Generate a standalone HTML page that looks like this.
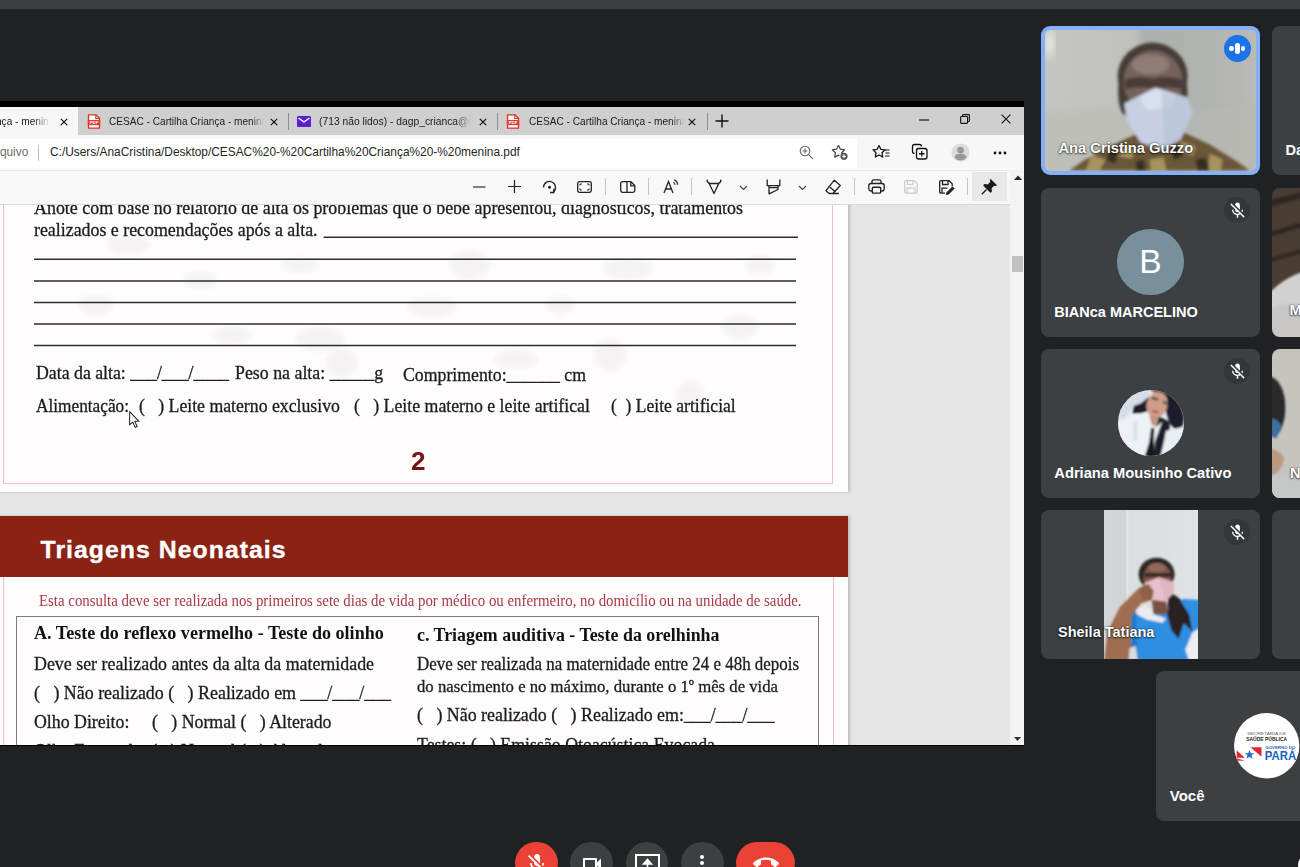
<!DOCTYPE html>
<html lang="pt-BR">
<head>
<meta charset="utf-8">
<title>Meet</title>
<style>
*{box-sizing:border-box;margin:0;padding:0}
html,body{width:1300px;height:867px;overflow:hidden;background:#202124;font-family:"Liberation Sans",sans-serif}
.abs{position:absolute}
#top{left:0;top:0;width:1300px;height:9px;background:#3c3d40}
#share{left:0;top:101px;width:1024px;height:644.700px;background:#000;overflow:hidden}
#tabs{left:0;top:6px;width:1024px;height:28px;background:#cfcfcf}
#addr{left:0;top:34px;width:1024px;height:35px;background:#f7f7f7}
#ptool{left:0;top:69px;width:1010px;height:35px;background:#f8f8f8;border-bottom:1px solid #d8d8d8;border-top:1px solid #ebebeb}
#pdf{left:0;top:104px;width:1010px;height:540px;background:#e6e6e6;overflow:hidden}
#sbar{left:1010px;top:69px;width:14px;height:575px;background:#f3f3f3}
.tile{background:#3c4043;border-radius:8px;overflow:hidden}
.name{color:#fff;font-weight:bold;font-size:15px;white-space:nowrap}

.tabtxt{position:absolute;top:0;height:29px;line-height:29px;font-size:10.1px;color:#1b1b1b;white-space:nowrap;overflow:hidden}
.tabx{position:absolute;top:11px;width:8px;height:8px}
.tsep{position:absolute;top:6px;width:1px;height:17px;background:#8e8e8e}
.ico{position:absolute}
.psep{position:absolute;top:9px;width:1px;height:17px;background:#c4c4c4}
.t{position:absolute;white-space:nowrap;line-height:1;transform-origin:0 0}
#ptool .ico,#ptool>div{margin-top:-2px}

</style>
</head>
<body>
<div id="top" class="abs"></div>
<div id="share" class="abs">
  <div id="tabs" class="abs">
<div class="abs" style="left:0;top:0;width:78px;height:28px;background:#f7f7f7"></div>
<div class="tabtxt" style="left:-4px;width:54px;-webkit-mask-image:linear-gradient(90deg,#000 70%,transparent 100%);mask-image:linear-gradient(90deg,#000 70%,transparent 100%)">nça - menina</div>
<svg class="tabx" style="left:59.5px" viewBox="0 0 10 10"><path d="M1 1l8 8M9 1l-8 8" stroke="#111" stroke-width="1.5" fill="none"/></svg>
<svg class="ico" style="left:87px;top:7px" width="14" height="15" viewBox="0 0 14 15"><path d="M1.5 0.8h7.5l3.5 3.5v9.9h-11z" fill="#fff" stroke="#d93025" stroke-width="1.3"/><path d="M8.8 0.8v3.7h3.7" fill="none" stroke="#d93025" stroke-width="1.1"/><rect x="0.8" y="6" width="12.4" height="5.2" fill="#e53935"/><text x="7" y="10.2" font-family="Liberation Sans,sans-serif" font-size="4.2" font-weight="bold" fill="#fff" text-anchor="middle">PDF</text></svg>
<div class="tabtxt" style="left:109px;width:155px;-webkit-mask-image:linear-gradient(90deg,#000 92%,transparent 100%);mask-image:linear-gradient(90deg,#000 92%,transparent 100%)">CESAC - Cartilha Criança - menina</div>
<svg class="tabx" style="left:269.5px" viewBox="0 0 10 10"><path d="M1 1l8 8M9 1l-8 8" stroke="#111" stroke-width="1.5" fill="none"/></svg>
<div class="tsep" style="left:288px"></div>
<svg class="ico" style="left:297px;top:9px" width="14" height="11" viewBox="0 0 14 11"><rect x="0" y="0" width="14" height="11" rx="1" fill="#5a1fd1"/><path d="M1.5 2l5.5 4l5.5-4" stroke="#fff" stroke-width="1.4" fill="none"/></svg>
<div class="tabtxt" style="left:319px;width:152px;font-size:10.300px;-webkit-mask-image:linear-gradient(90deg,#000 90%,transparent 100%);mask-image:linear-gradient(90deg,#000 90%,transparent 100%)">(713 não lidos) - dagp_crianca@gmail</div>
<svg class="tabx" style="left:479px" viewBox="0 0 10 10"><path d="M1 1l8 8M9 1l-8 8" stroke="#111" stroke-width="1.5" fill="none"/></svg>
<div class="tsep" style="left:497px"></div>
<svg class="ico" style="left:506px;top:7px" width="14" height="15" viewBox="0 0 14 15"><path d="M1.5 0.8h7.5l3.5 3.5v9.9h-11z" fill="#fff" stroke="#d93025" stroke-width="1.3"/><path d="M8.8 0.8v3.7h3.7" fill="none" stroke="#d93025" stroke-width="1.1"/><rect x="0.8" y="6" width="12.4" height="5.2" fill="#e53935"/><text x="7" y="10.2" font-family="Liberation Sans,sans-serif" font-size="4.2" font-weight="bold" fill="#fff" text-anchor="middle">PDF</text></svg>
<div class="tabtxt" style="left:529px;width:155px;-webkit-mask-image:linear-gradient(90deg,#000 92%,transparent 100%);mask-image:linear-gradient(90deg,#000 92%,transparent 100%)">CESAC - Cartilha Criança - menina</div>
<svg class="tabx" style="left:688px" viewBox="0 0 10 10"><path d="M1 1l8 8M9 1l-8 8" stroke="#111" stroke-width="1.5" fill="none"/></svg>
<div class="tsep" style="left:707px"></div>
<svg class="ico" style="left:715px;top:7px" width="14" height="14" viewBox="0 0 14 14"><path d="M7 0.5v13M0.5 7h13" stroke="#111" stroke-width="1.4" fill="none"/></svg>
<svg class="ico" style="left:919px;top:11.700px" width="11" height="2" viewBox="0 0 12 2"><path d="M0 1h11" stroke="#111" stroke-width="1.3"/></svg>
<svg class="ico" style="left:959.500px;top:7.200px" width="10" height="10" viewBox="0 0 11 11"><rect x="0.7" y="2.7" width="7.6" height="7.6" rx="1" fill="none" stroke="#111" stroke-width="1.2"/><path d="M2.7 2.7v-1q0-1 1-1h5.6q1 0 1 1v5.6q0 1-1 1h-1" fill="none" stroke="#111" stroke-width="1.2"/></svg>
<svg class="ico" style="left:1000.500px;top:7.200px" width="10" height="10" viewBox="0 0 11 11"><path d="M0.7 0.7l9.6 9.6M10.3 0.7l-9.6 9.6" stroke="#111" stroke-width="1.2" fill="none"/></svg>
</div>
  <div id="addr" class="abs">
<div class="abs" style="left:0;top:3.500px;width:857px;height:29px;background:#fff"></div>
<div class="abs" style="left:-12px;top:0;height:35px;line-height:35px;font-size:11.9px;color:#6b6b6b;white-space:nowrap">Arquivo</div>
<div class="abs" style="left:38px;top:10px;width:1px;height:16px;background:#bdbdbd"></div>
<div class="abs" id="url" style="left:50px;top:0;height:35px;line-height:35px;font-size:11.9px;color:#262626;white-space:nowrap">C:/Users/AnaCristina/Desktop/CESAC%20-%20Cartilha%20Criança%20-%20menina.pdf</div>
<svg class="ico" style="left:799px;top:10px" width="15" height="15" viewBox="0 0 15 15"><circle cx="6" cy="6" r="4.8" fill="none" stroke="#666" stroke-width="1.1"/><path d="M9.6 9.6l4.6 4.6M6 3.6v4.8M3.6 6h4.8" stroke="#666" stroke-width="1.1" fill="none"/></svg>
<svg class="ico" style="left:831px;top:9px" width="18" height="17" viewBox="0 0 18 17"><path d="M7.5 1.2l1.9 4l4.3 0.6l-3.1 3l0.3 1.2M7.5 1.2l-1.9 4l-4.3 0.6l3.1 3l-0.7 4.3l3.8-2l1 0.5" fill="none" stroke="#444" stroke-width="1.2" stroke-linejoin="round"/><circle cx="13" cy="12.3" r="3.6" fill="#555"/><path d="M13 10.3v4M11 12.3h4" stroke="#fff" stroke-width="1"/></svg>
<svg class="ico" style="left:872px;top:9px" width="18" height="17" viewBox="0 0 18 17"><path d="M7 1.5l1.8 3.8l4.2 0.6l-3 2.9l0.7 4.2l-3.7-2l-3.7 2l0.7-4.2l-3-2.9l4.2-0.6z" fill="none" stroke="#111" stroke-width="1.3" stroke-linejoin="round"/><path d="M12.5 6h5M13.5 9h4M13 12h4.5" stroke="#111" stroke-width="1.2"/></svg>
<svg class="ico" style="left:911px;top:8px" width="18" height="18" viewBox="0 0 18 18"><path d="M3.5 10.5q-2 0-2-2v-5q0-2 2-2h5q2 0 2 2" fill="none" stroke="#111" stroke-width="1.3"/><rect x="5.5" y="5.5" width="10.5" height="10.5" rx="2.2" fill="none" stroke="#111" stroke-width="1.3"/><path d="M10.75 8v5.5M8 10.75h5.5" stroke="#111" stroke-width="1.3"/></svg>
<svg class="ico" style="left:950.500px;top:8.200px" width="19" height="19" viewBox="0 0 24 24"><circle cx="12" cy="12" r="11.5" fill="#dcdcdc"/><circle cx="12" cy="9" r="4.2" fill="#9a9a9a"/><path d="M4.5 18.5q0-5 7.5-5t7.5 5q-3 3.5-7.500 3.500t-7.500-3.500z" fill="#9a9a9a"/></svg>
<svg class="ico" style="left:993px;top:16px" width="14" height="4" viewBox="0 0 14 4"><circle cx="2" cy="2" r="1.4" fill="#111"/><circle cx="7" cy="2" r="1.4" fill="#111"/><circle cx="12" cy="2" r="1.4" fill="#111"/></svg>
</div>
  <div id="ptool" class="abs">
<svg class="ico" style="left:473px;top:17px" width="13" height="2" viewBox="0 0 13 2"><path d="M0 1h12.5" stroke="#333" stroke-width="1.2"/></svg>
<svg class="ico" style="left:508px;top:11px" width="13" height="13" viewBox="0 0 13 13"><path d="M6.500 0v13M0 6.500h13" stroke="#222" stroke-width="1.2"/></svg>
<svg class="ico" style="left:542px;top:10px" width="16" height="16" viewBox="0 0 16 16"><path d="M1.500 8.500a6 6 0 1 1 9.800 4.600" stroke="#222" stroke-width="1.3" fill="none"/><path d="M11.800 9.800v3.700h-3.700" stroke="#222" stroke-width="1.3" fill="none"/><circle cx="7.500" cy="8.300" r="1.500" fill="#222"/></svg>
<svg class="ico" style="left:577px;top:12px" width="15" height="12" viewBox="0 0 15 12"><rect x="0.700" y="0.700" width="13.600" height="10.600" rx="1.800" stroke="#222" stroke-width="1.3" fill="none"/><path d="M3 4.500v-1.500h1.800M12 4.500v-1.500h-1.800M3 7.500v1.500h1.800M12 7.500v1.500h-1.800" stroke="#222" stroke-width="1" fill="none"/></svg>
<div class="psep" style="left:605px"></div>
<svg class="ico" style="left:620px;top:12px" width="16" height="12" viewBox="0 0 16 12"><path d="M7 0.700h-4.500q-1.800 0-1.800 1.800v7q0 1.800 1.800 1.800h4.500zM7 0.700h4l3.800 3.800v5q0 1.800-1.800 1.800h-6" stroke="#222" stroke-width="1.3" fill="none" stroke-linejoin="round"/><path d="M10.800 1v3.800h3.800" stroke="#222" stroke-width="1.3" fill="none"/></svg>
<div class="psep" style="left:648px"></div>
<svg class="ico" style="left:663px;top:10px" width="17" height="15" viewBox="0 0 17 15"><path d="M1 14l4.500-11.500l4.500 11.500M2.600 10h5.800" stroke="#222" stroke-width="1.3" fill="none"/><path d="M10.300 3.200q1.500 0.700 1.800 2.600M11.300 0.800q3 1.300 3.500 5" stroke="#222" stroke-width="1.100" fill="none"/></svg>
<div class="psep" style="left:691px"></div>
<svg class="ico" style="left:706px;top:10.300px" width="16" height="16" viewBox="0 0 16 16"><path d="M1 0.600q0.200 3.400 3 3.900h8q2.800-0.500 3-3.900M3.300 4.800l4.700 9.700l4.700-9.700" stroke="#222" stroke-width="1.3" fill="none" stroke-linejoin="round"/></svg>
<svg class="ico" style="left:739px;top:16px" width="9" height="6" viewBox="0 0 9 6"><path d="M1 1l3.500 3.500l3.500-3.500" stroke="#444" stroke-width="1.100" fill="none"/></svg>
<svg class="ico" style="left:766px;top:10.300px" width="15" height="16" viewBox="0 0 15 16"><path d="M1.200 0.600v6h12.600v-6M3 6.800v8l9-4.300v-3.700M3 8.700h9" stroke="#222" stroke-width="1.3" fill="none" stroke-linejoin="round"/></svg>
<svg class="ico" style="left:798px;top:16px" width="9" height="6" viewBox="0 0 9 6"><path d="M1 1l3.500 3.500l3.500-3.500" stroke="#444" stroke-width="1.100" fill="none"/></svg>
<svg class="ico" style="left:825px;top:10px" width="17" height="16" viewBox="0 0 17 16"><path d="M9.300 1.200l6 5.300l-7.300 8h-3.800l-3.200-2.800z" stroke="#222" stroke-width="1.3" fill="none" stroke-linejoin="round"/><path d="M4.800 8l5.600 5M8 14.500h6" stroke="#222" stroke-width="1.3" fill="none"/></svg>
<div class="psep" style="left:854px"></div>
<svg class="ico" style="left:868px;top:10px" width="17" height="15" viewBox="0 0 17 15"><path d="M4 4.500v-2q0-1.700 1.700-1.700h5.600q1.700 0 1.700 1.700v2" stroke="#222" stroke-width="1.3" fill="none"/><rect x="0.800" y="4.500" width="15.400" height="7.500" rx="2.200" stroke="#222" stroke-width="1.3" fill="none" stroke-width="1.500"/><rect x="4.300" y="8.300" width="8.400" height="5.800" rx="1.200" fill="#f8f8f8" stroke="#222" stroke-width="1.400"/></svg>
<svg class="ico" style="left:904px;top:11px" width="14" height="14" viewBox="0 0 14 14"><path d="M0.700 2.200q0-1.500 1.500-1.500h8l3 3v8q0 1.500-1.500 1.500h-9.500q-1.500 0-1.500-1.500zM3.500 0.700v3.800h5.500v-3.800M3 13v-4.800h8v4.800" stroke="#c9c9c9" stroke-width="1.200" fill="none"/></svg>
<svg class="ico" style="left:939px;top:11px" width="16" height="15" viewBox="0 0 16 15"><path d="M6 13.200h-3.800q-1.500 0-1.500-1.500v-9.500q0-1.500 1.500-1.500h8l3 3v2.500M3.500 0.700v3.800h5.500v-3.800M3 13v-4.800h5.500" stroke="#222" stroke-width="1.3" fill="none"/><path d="M13.500 6.800l1.700 1.700l-5.500 5.500l-2.500 0.800l0.800-2.500z" fill="#222" stroke="#222" stroke-width="0.800" stroke-linejoin="round"/></svg>
<div class="psep" style="left:967px"></div>
<div class="abs" style="left:972px;top:3px;width:35px;height:29px;background:#e8e8e8"></div>
<svg class="ico" style="left:981px;top:9px" width="17" height="17" viewBox="0 0 17 17"><path d="M9.500 0.800l6.700 6.700l-1.600 0.600l-1.400-0.400l-2.600 2.600l0.300 3.300l-1.300 1.300l-7.500-7.500l1.300-1.300l3.300 0.300l2.600-2.600l-0.400-1.400z" fill="#1a1a1a"/><path d="M5.500 11.500l-4.700 4.700" stroke="#1a1a1a" stroke-width="1.300"/></svg>
</div>
  <div id="pdf" class="abs">
<div class="abs" style="left:-10px;top:-10px;width:858.2px;height:296.5px;background:#fefcfd;box-shadow:2px 0 3px rgba(0,0,0,.18)"></div>
<div class="abs" style="left:3px;top:-10px;width:830px;height:288.5px;border:1.7px solid #f0bec3"></div>
<svg class="ico" style="left:0;top:0" width="850" height="290" viewBox="0 0 850 290"><defs><filter id="wmb" x="-30%" y="-30%" width="160%" height="160%"><feGaussianBlur stdDeviation="2.500"/></filter></defs><g filter="url(#wmb)" fill="#f3f1f2" opacity=".85"><ellipse cx="128" cy="40" rx="22" ry="9"/><ellipse cx="232" cy="130" rx="20" ry="8"/><ellipse cx="320" cy="134" rx="24" ry="12"/><ellipse cx="342" cy="158" rx="16" ry="14"/><ellipse cx="432" cy="102" rx="26" ry="10"/><ellipse cx="516" cy="154" rx="22" ry="9"/><ellipse cx="628" cy="64" rx="24" ry="10"/><ellipse cx="740" cy="122" rx="18" ry="12"/><ellipse cx="96" cy="100" rx="18" ry="10"/><ellipse cx="470" cy="60" rx="20" ry="14"/><ellipse cx="610" cy="150" rx="16" ry="16"/><ellipse cx="690" cy="190" rx="14" ry="14"/><ellipse cx="200" cy="75" rx="16" ry="9"/><ellipse cx="560" cy="100" rx="14" ry="9"/><ellipse cx="760" cy="60" rx="14" ry="10"/><ellipse cx="300" cy="60" rx="18" ry="8"/></g></svg>
<svg class="ico" style="left:0;top:0" width="860" height="200" viewBox="0 0 860 200"><path d="M323.6 32.30H798" stroke="#2c2c2c" stroke-width="1.5"/><path d="M34 54.20H796" stroke="#2c2c2c" stroke-width="1.5"/><path d="M34 76.00H796" stroke="#2c2c2c" stroke-width="1.5"/><path d="M34 97.40H796" stroke="#2c2c2c" stroke-width="1.5"/><path d="M34 119.00H796" stroke="#2c2c2c" stroke-width="1.5"/><path d="M34 140.40H796" stroke="#2c2c2c" stroke-width="1.5"/></svg>
<div class="abs" style="left:-10px;top:311px;width:858.2px;height:300px;background:#fefcfd;box-shadow:2px 0 3px rgba(0,0,0,.18)"></div>
<div class="abs" style="left:3px;top:360px;width:831px;height:300px;border:1.7px solid #f0bec3"></div>
<div class="abs" style="left:-10px;top:311px;width:858.2px;height:60.5px;background:#8b2315"></div>
<div class="abs" style="left:16px;top:410.5px;width:803px;height:300px;border:1.6px solid #7d7d7d"></div>
<div class="t" style="left:34.0px;top:-4.71px;font-family:'Liberation Serif',serif;font-size:17.8px;font-weight:normal;color:#1c1c1c;-webkit-text-stroke:0.3px #1c1c1c;transform:scaleX(1.0069)">Anote com base no relatório de alta os problemas que o bebê apresentou, diagnósticos, tratamentos</div>
<div class="t" style="left:34.0px;top:16.59px;font-family:'Liberation Serif',serif;font-size:17.8px;font-weight:normal;color:#1c1c1c;-webkit-text-stroke:0.3px #1c1c1c;transform:scaleX(1.0043)">realizados e recomendações após a alta.</div>
<div class="t" style="left:36.0px;top:160.29px;font-family:'Liberation Serif',serif;font-size:17.8px;font-weight:normal;color:#1c1c1c;-webkit-text-stroke:0.3px #1c1c1c;transform:scaleX(0.9996)">Data da alta: ___/___/____</div>
<div class="t" style="left:235.4px;top:160.29px;font-family:'Liberation Serif',serif;font-size:17.8px;font-weight:normal;color:#1c1c1c;-webkit-text-stroke:0.3px #1c1c1c;transform:scaleX(1.0036)">Peso na alta: _____g</div>
<div class="t" style="left:403.4px;top:161.59px;font-family:'Liberation Serif',serif;font-size:17.8px;font-weight:normal;color:#1c1c1c;-webkit-text-stroke:0.3px #1c1c1c;transform:scaleX(0.9987)">Comprimento:______ cm</div>
<div class="t" style="left:36.0px;top:193.29px;font-family:'Liberation Serif',serif;font-size:17.8px;font-weight:normal;color:#1c1c1c;-webkit-text-stroke:0.3px #1c1c1c;transform:scaleX(0.9708)">Alimentação:</div>
<div class="t" style="left:138.5px;top:193.29px;font-family:'Liberation Serif',serif;font-size:17.8px;font-weight:normal;color:#1c1c1c;-webkit-text-stroke:0.3px #1c1c1c;transform:scaleX(0.9973)">(&nbsp;&nbsp;&nbsp;) Leite materno exclusivo</div>
<div class="t" style="left:353.8px;top:193.29px;font-family:'Liberation Serif',serif;font-size:17.8px;font-weight:normal;color:#1c1c1c;-webkit-text-stroke:0.3px #1c1c1c;transform:scaleX(0.9997)">(&nbsp;&nbsp;&nbsp;) Leite materno e leite artifical</div>
<div class="t" style="left:610.5px;top:193.29px;font-family:'Liberation Serif',serif;font-size:17.8px;font-weight:normal;color:#1c1c1c;-webkit-text-stroke:0.3px #1c1c1c;transform:scaleX(0.9867)">(&nbsp;&nbsp;) Leite artificial</div>
<div class="t" style="left:411.4px;top:243.49px;font-family:'Liberation Sans',sans-serif;font-size:26px;font-weight:bold;color:#7a1419;-webkit-text-stroke:0px #7a1419;transform:scaleX(1.0022)">2</div>
<div class="t" style="left:40.6px;top:332.71px;font-family:'Liberation Sans',sans-serif;font-size:24.8px;font-weight:bold;color:#fff;-webkit-text-stroke:0.35px #fff;transform:scaleX(1.0000);letter-spacing:1.036px">Triagens Neonatais</div>
<div class="t" style="left:39.4px;top:387.63px;font-family:'Liberation Serif',serif;font-size:16.2px;font-weight:normal;color:#aa3a44;-webkit-text-stroke:0px #aa3a44;transform:scaleX(0.9175)">Esta consulta deve ser realizada nos primeiros sete dias de vida por médico ou enfermeiro, no domicílio ou na unidade de saúde.</div>
<div class="t" style="left:34.0px;top:418.93px;font-family:'Liberation Serif',serif;font-size:18px;font-weight:bold;color:#111;-webkit-text-stroke:0px #111;transform:scaleX(1.0047)">A. Teste do reflexo vermelho - Teste do olinho</div>
<div class="t" style="left:417.0px;top:420.63px;font-family:'Liberation Serif',serif;font-size:18px;font-weight:bold;color:#111;-webkit-text-stroke:0px #111;transform:scaleX(0.9933)">c. Triagem auditiva - Teste da orelhinha</div>
<div class="t" style="left:34.0px;top:450.46px;font-family:'Liberation Serif',serif;font-size:18.2px;font-weight:normal;color:#1c1c1c;-webkit-text-stroke:0.3px #1c1c1c;transform:scaleX(0.9830)">Deve ser realizado antes da alta da maternidade</div>
<div class="t" style="left:417.0px;top:450.46px;font-family:'Liberation Serif',serif;font-size:18.2px;font-weight:normal;color:#1c1c1c;-webkit-text-stroke:0.3px #1c1c1c;transform:scaleX(0.9305)">Deve ser realizada na maternidade entre 24 e 48h depois</div>
<div class="t" style="left:417.0px;top:472.86px;font-family:'Liberation Serif',serif;font-size:17px;font-weight:normal;color:#1c1c1c;-webkit-text-stroke:0.3px #1c1c1c;transform:scaleX(0.9826)">do nascimento e no máximo, durante o 1º mês de vida</div>
<div class="t" style="left:34.0px;top:479.23px;font-family:'Liberation Serif',serif;font-size:18px;font-weight:normal;color:#1c1c1c;-webkit-text-stroke:0.3px #1c1c1c;transform:scaleX(0.9948)">(&nbsp;&nbsp;&nbsp;) Não realizado (&nbsp;&nbsp;&nbsp;) Realizado em ___/___/___</div>
<div class="t" style="left:417.0px;top:501.43px;font-family:'Liberation Serif',serif;font-size:18px;font-weight:normal;color:#1c1c1c;-webkit-text-stroke:0.3px #1c1c1c;transform:scaleX(0.9945)">(&nbsp;&nbsp;&nbsp;) Não realizado (&nbsp;&nbsp;&nbsp;) Realizado em:___/___/___</div>
<div class="t" style="left:34.0px;top:508.43px;font-family:'Liberation Serif',serif;font-size:18px;font-weight:normal;color:#1c1c1c;-webkit-text-stroke:0.3px #1c1c1c;transform:scaleX(0.9886)">Olho Direito:</div>
<div class="t" style="left:152.0px;top:508.43px;font-family:'Liberation Serif',serif;font-size:18px;font-weight:normal;color:#1c1c1c;-webkit-text-stroke:0.3px #1c1c1c;transform:scaleX(0.9892)">(&nbsp;&nbsp;&nbsp;) Normal (&nbsp;&nbsp;&nbsp;) Alterado</div>
<div class="t" style="left:34.0px;top:536.62px;font-family:'Liberation Serif',serif;font-size:18px;font-weight:normal;color:#1c1c1c;-webkit-text-stroke:0.3px #1c1c1c;transform:scaleX(0.9935)">Olho Esquerdo: (&nbsp;&nbsp;&nbsp;) Normal (&nbsp;&nbsp;&nbsp;) Alterado</div>
<div class="t" style="left:417.0px;top:531.12px;font-family:'Liberation Serif',serif;font-size:18px;font-weight:normal;color:#1c1c1c;-webkit-text-stroke:0.3px #1c1c1c;transform:scaleX(0.9896)">Testes: (&nbsp;&nbsp;&nbsp;) Emissão Otoacústica Evocada</div>
<svg class="ico" style="left:128.500px;top:206px" width="11" height="17.500" viewBox="0 0 12 19"><path d="M0.7 0.7v14.500l3.400-3.200l2.600 5.800l2.200-1l-2.600-5.600h4.600z" fill="#fff" stroke="#222" stroke-width="1.1" stroke-linejoin="round"/></svg>
</div>
  <div id="sbar" class="abs">
<svg class="ico" style="left:3.500px;top:4.500px" width="8" height="5" viewBox="0 0 8 5"><path d="M0 5l4-4.500l4 4.500z" fill="#222"/></svg>
<div class="abs" style="left:2px;top:86px;width:11px;height:16px;background:#c1c1c1"></div>
<svg class="ico" style="left:4px;top:567px" width="7" height="4" viewBox="0 0 7 4"><path d="M0 0l3.500 4l3.500-4z" fill="#333"/></svg>
</div>
</div>
<div id="tiles">
<div class="abs" style="left:1041.4px;top:26.4px;width:218.2px;height:148.5px;border-radius:9px;background:#84b0f8"></div>
<svg class="ico" style="left:1045.4px;top:30.4px;border-radius:5px" width="210.200" height="140.500" viewBox="1045.400 30.400 210.200 140.500">
<defs>
<filter id="b1" x="-20%" y="-20%" width="140%" height="140%"><feGaussianBlur stdDeviation="1.600"/></filter>
<filter id="b3" x="-20%" y="-20%" width="140%" height="140%"><feGaussianBlur stdDeviation="4"/></filter>
<linearGradient id="w1" x1="0" x2="1" y1="0" y2="0"><stop offset="0" stop-color="#c6c6c2"/><stop offset="0.420" stop-color="#c0c1bd"/><stop offset="0.470" stop-color="#abb0ac"/><stop offset="0.800" stop-color="#b3b5b1"/><stop offset="1" stop-color="#bcbcb8"/></linearGradient>
</defs>
<rect x="1040" y="25" width="225" height="155" fill="url(#w1)"/>
<ellipse cx="1050" cy="44" rx="4" ry="14" fill="#f2f0ea" filter="url(#b3)"/>
<rect x="1040" y="110" width="225" height="70" fill="#b9b9b4" opacity=".5" filter="url(#b3)"/>
<g filter="url(#b1)">
<path d="M1070 171l14-10l30-16l26-12l40-2l30 14l26 16l14 10z" fill="#6a5738"/>
<ellipse cx="1153" cy="77" rx="35" ry="34" fill="#463d38"/>
<path d="M1119 82q-2 22 4 32l8 4l-2-36zM1187 82q3 20-3 32l-8 4l2-36z" fill="#463d38"/>
<ellipse cx="1153.500" cy="82" rx="29.500" ry="31" fill="#76625b"/>
<ellipse cx="1151" cy="65" rx="19" ry="10" fill="#8f7b74"/>
<path d="M1125 80q14-5 28-1q15-4 30 1l-1 10q-14-4-29-1q-14-3-27 1z" fill="#4a3c38"/>
<path d="M1148 130h18l5 18h-27z" fill="#7c5e4e"/>
<path d="M1124.600 104l31-16l32 10l5.500 15l-12 27l-18 10l-22-7l-13-20z" fill="#c6d0e2"/>
<path d="M1140 98l16-9l20 6l-4 12l-24 4z" fill="#d9e0ee"/>
<path d="M1162 92l26 7l5 14l-12 27l-16 9z" fill="#b3bfd4" opacity=".55"/>
<path d="M1092 156l14 4l-6 11h-14zM1124 146l12 3l-4 10l-12-2zM1182 142l14 5l-3 9l-13-4zM1210 154l13 6l-2 11h-12zM1150 160l14-2l3 13h-16z" fill="#a8935f"/>
<path d="M1110 150l8 2l-2 12l-9-3zM1170 148l8-3l6 10l-9 6zM1196 160l10-2l4 13h-12zM1136 162l8-2l2 11h-9z" fill="#362d20"/>
</g>
</svg>
<div class="abs" style="left:1223.500px;top:34.800px;width:27.600px;height:27.600px;border-radius:50%;background:#1a73e8"></div>
<div class="abs" style="left:1229.200px;top:46.300px;width:4.600px;height:4.600px;border-radius:2.300px;background:#fff"></div>
<div class="abs" style="left:1235px;top:43.200px;width:4.600px;height:10.800px;border-radius:2.300px;background:#fff"></div>
<div class="abs" style="left:1240.800px;top:46.300px;width:4.600px;height:4.600px;border-radius:2.300px;background:#fff"></div>
<div class="t" style="left:1058.5px;top:141.26px;font-size:14.7px;font-weight:bold;color:#fff;text-shadow:0 0 2px rgba(0,0,0,.75),0 1px 2px rgba(0,0,0,.6)">Ana Cristina Guzzo</div>
<div class="abs tile" style="left:1040.800px;top:187.900px;width:219.100px;height:148.900px"></div>
<div class="abs" style="left:1117.300px;top:228.800px;width:66.400px;height:66.400px;border-radius:50%;background:#78909c;color:#fff;font-size:33.500px;line-height:66.400px;text-align:center">B</div>
<div class="abs" style="left:1224.3px;top:197.1px;width:26px;height:26px;border-radius:50%;background:#33363a"></div>
<svg class="ico" style="left:1227.8px;top:200.6px" width="19" height="19" viewBox="0 0 24 24"><path d="M19 11h-1.700c0 .740-.160 1.430-.430 2.050l1.230 1.230c.560-.980.900-2.090.900-3.280zm-4.020.170c0-.060.020-.110.020-.170V5c0-1.660-1.340-3-3-3S9 3.340 9 5v.180l5.980 5.990zM4.270 3L3 4.270l6.010 6.010V11c0 1.660 1.330 3 2.990 3 .220 0 .440-.030.650-.080l1.660 1.660c-.710.330-1.500.520-2.310.520-2.760 0-5.300-2.100-5.300-5.100H5c0 3.410 2.720 6.230 6 6.720V21h2v-3.280c.910-.130 1.770-.450 2.540-.900L19.730 21 21 19.730 4.270 3z" fill="#fff"/></svg>
<div class="t" style="left:1054.3px;top:304.73px;font-size:14.5px;font-weight:bold;color:#fff">BIANca MARCELINO</div>
<div class="abs tile" style="left:1040.800px;top:348.700px;width:219.100px;height:149.100px"></div>
<svg class="ico" style="left:1117.500px;top:390px;border-radius:50%" width="66" height="66" viewBox="1117.500 390 66 66">
<defs><filter id="b2" x="-20%" y="-20%" width="140%" height="140%"><feGaussianBlur stdDeviation="1.100"/></filter></defs>
<rect x="1110" y="385" width="80" height="80" fill="#e3e9ee"/>
<g filter="url(#b2)">
<path d="M1117.4 410.7L1128.5 394.1L1148.7 389.5L1146.9 401.5L1133.1 407.0L1121.1 421.7z" fill="#d5dee6"/>
<path d="M1148.7 389.5L1169.0 390.4L1180.1 401.5L1183.8 418.1L1182.0 427.3L1174.6 429.1L1169.0 423.6L1165.4 410.7L1161.7 395.9z" fill="#1c1d2b"/>
<path d="M1133.1 406.1L1140.4 403.3L1148.7 396.8L1148.7 410.7L1140.4 413.4L1132.1 413.4z" fill="#1c1d2b"/>
<path d="M1158.0 416.2L1169.0 421.7L1169.0 431.0L1163.5 442.0L1161.7 456.8L1145.1 456.8L1153.4 438.4L1156.1 425.4z" fill="#1c1d2b"/>
<ellipse cx="1156.6" cy="404.7" rx="10.500" ry="13" fill="#cd9e89" transform="rotate(15 1156.6 404.7)"/>
<path d="M1151.5 396.8L1158.0 398.7L1157.5 400.5L1151.1 398.9z" fill="#3a2a2a"/>
<path d="M1162.6 401.0L1168.1 402.8L1167.4 404.7L1162.1 402.8z" fill="#3a2a2a"/>
<path d="M1151.5 409.8L1158.0 410.7L1157.0 413.4L1152.0 412.5z" fill="#c2566a"/>
<path d="M1148.7 415.3L1158.0 417.1L1156.1 426.4L1150.6 424.5z" fill="#c49580"/>
<path d="M1117.4 421.7L1133.1 414.4L1147.8 412.5L1151.5 426.4L1149.7 442.0L1143.2 456.8L1117.4 456.8z" fill="#eef2f6"/>
<path d="M1132.1 421.7L1137.7 419.9L1136.8 440.2L1133.1 442.0z" fill="#dbe3ea"/>
<path d="M1156.1 426.4L1161.7 421.7L1154.3 442.0L1153.4 455.0L1151.5 438.4z" fill="#eef2f6"/>
<path d="M1165.4 431.0L1174.6 429.1L1183.8 426.4L1183.8 442.0L1169.0 453.1L1159.8 456.8L1163.5 442.0z" fill="#eaeff3"/>
<path d="M1150.6 427.3L1153.8 429.1L1153.4 442.0L1154.3 456.8L1144.1 456.8L1148.7 442.0z" fill="#15161f"/>
</g></svg>
<div class="abs" style="left:1224.3px;top:358.2px;width:26px;height:26px;border-radius:50%;background:#33363a"></div>
<svg class="ico" style="left:1227.8px;top:361.7px" width="19" height="19" viewBox="0 0 24 24"><path d="M19 11h-1.700c0 .740-.160 1.430-.430 2.050l1.230 1.230c.560-.980.900-2.090.900-3.280zm-4.020.170c0-.060.020-.110.020-.170V5c0-1.660-1.340-3-3-3S9 3.340 9 5v.180l5.980 5.990zM4.270 3L3 4.270l6.010 6.010V11c0 1.660 1.330 3 2.990 3 .220 0 .440-.030.650-.080l1.660 1.660c-.710.330-1.500.520-2.310.520-2.760 0-5.300-2.100-5.300-5.100H5c0 3.410 2.720 6.230 6 6.720V21h2v-3.280c.910-.130 1.770-.450 2.540-.900L19.730 21 21 19.730 4.270 3z" fill="#fff"/></svg>
<div class="t" style="left:1054.3px;top:466.26px;font-size:14.7px;font-weight:bold;color:#fff">Adriana Mousinho Cativo</div>
<div class="abs tile" style="left:1040.800px;top:510.400px;width:219.100px;height:148.500px"></div>
<svg class="ico" style="left:1103.700px;top:510.400px" width="94.500" height="148.500" viewBox="1103.700 510.400 94.500 148.500">
<defs><linearGradient id="w4" x1="0" x2="1" y1="0" y2="0"><stop offset="0" stop-color="#d3d7da"/><stop offset="0.255" stop-color="#d0d4d7"/><stop offset="0.268" stop-color="#e3e6e8"/><stop offset="0.290" stop-color="#dadee1"/><stop offset="1" stop-color="#e0e3e6"/></linearGradient></defs>
<rect x="1100" y="505" width="100" height="160" fill="url(#w4)"/>
<g filter="url(#b2)">
<path d="M1168.4 591.5L1176.4 596.8L1185.3 603.9L1192.4 621.7L1195.9 635.9L1188.8 632.3L1183.5 625.2L1178.2 640.3L1171.0 632.3L1167.5 639.4L1165.7 618.1L1167.5 603.9z" fill="#2b2421"/>
<path d="M1126.6 660.8L1129.3 616.3L1140.9 606.6L1153.3 614.6L1167.5 607.5L1183.5 599.5L1199.5 600.4L1199.5 660.8z" fill="#2f8fe2"/>
<path d="M1129.3 616.3L1135.5 611.9L1138.2 660.8L1126.6 660.8z" fill="#2479c9"/>
<path d="M1170.2 596.8L1179.9 600.4L1188.8 614.6L1192.4 632.3L1183.5 623.5L1178.2 639.4L1171.0 630.6L1166.6 614.6z" fill="#2b2421"/>
<path d="M1135.5 610.1L1144.4 604.8L1153.3 614.6L1165.7 619.0L1162.2 623.1L1146.2 619.9L1136.4 614.6z" fill="#e9ecee"/>
<ellipse cx="1156.3" cy="574.6" rx="18" ry="16.500" fill="#2c2522"/>
<ellipse cx="1157.2" cy="578.2" rx="14" ry="14.500" fill="#80574a"/>
<ellipse cx="1156.5" cy="568.0" rx="9" ry="4.500" fill="#94685a"/>
<path d="M1144.4 573.4L1171.9 573.4L1171.9 577.6L1144.4 577.6z" fill="#3b2b26"/>
<path d="M1151.5 600.4L1165.7 600.4L1167.5 614.6L1153.3 614.6z" fill="#7a5140"/>
<path d="M1144.0 583.5L1158.6 577.6L1173.7 582.6L1173.2 593.3L1164.8 601.8L1153.3 600.4L1146.5 593.3z" fill="#e8c0cb"/>
<path d="M1158.6 577.6L1173.7 582.6L1173.2 593.3L1164.8 601.8z" fill="#dcaebc" opacity=".6"/>
<path d="M1103.9 660.8L1107.1 632.3L1119.5 607.5L1126.6 600.4L1138.2 588.8L1148.0 584.4L1153.3 591.5L1151.5 600.4L1140.9 603.9L1131.1 616.3L1130.2 660.8z" fill="#a06d4f"/>
<path d="M1138.2 588.8L1148.0 584.4L1153.3 591.5L1151.5 600.4L1142.6 600.4z" fill="#8f5f47"/>
<path d="M1184.9 650.1L1192.4 632.3L1199.5 628.8L1199.5 660.8L1188.8 660.8z" fill="#eceef0"/>
<path d="M1129.3 648.3L1135.5 646.5L1137.3 660.8L1128.4 660.8z" fill="#d9dcdf"/>
</g></svg>
<div class="abs" style="left:1224.3px;top:519.2px;width:26px;height:26px;border-radius:50%;background:#33363a"></div>
<svg class="ico" style="left:1227.8px;top:522.7px" width="19" height="19" viewBox="0 0 24 24"><path d="M19 11h-1.700c0 .740-.160 1.430-.430 2.050l1.230 1.230c.560-.980.900-2.090.900-3.280zm-4.020.170c0-.060.020-.110.020-.170V5c0-1.660-1.340-3-3-3S9 3.340 9 5v.180l5.980 5.990zM4.270 3L3 4.270l6.010 6.010V11c0 1.660 1.330 3 2.990 3 .220 0 .440-.030.650-.080l1.660 1.660c-.710.330-1.500.520-2.310.520-2.760 0-5.300-2.100-5.300-5.100H5c0 3.410 2.720 6.230 6 6.720V21h2v-3.280c.910-.130 1.770-.450 2.540-.900L19.730 21 21 19.730 4.270 3z" fill="#fff"/></svg>
<div class="t" style="left:1058px;top:625.23px;font-size:14.5px;font-weight:bold;color:#fff;text-shadow:0 0 2px rgba(0,0,0,.75),0 1px 2px rgba(0,0,0,.6)">Sheila Tatiana</div>
<div class="abs tile" style="left:1272px;top:26.400px;width:60px;height:148.500px"></div>
<div class="t" style="left:1285.5px;top:142.84px;font-size:14.6px;font-weight:bold;color:#fff">Da</div>
<svg class="ico" style="left:1272px;top:187.900px;border-radius:8px 0 0 8px" width="28" height="148.900" viewBox="1272 187.900 28 148.900">
<rect x="1270" y="185" width="32" height="155" fill="#4a3d33"/>
<g filter="url(#b2)">
<path d="M1270 200l32-8v6l-32 9zM1270 232l32-10v5l-32 10zM1270 258l32-9v4l-32 9z" fill="#2e2620"/>
<path d="M1270 292q14-14 32-20v70h-32z" fill="#d2d1d1"/>
<path d="M1270 310q10-8 20-6l12 10v30h-32z" fill="#c9c6c4"/>
</g></svg>
<div class="t" style="left:1289.6px;top:302.64px;font-size:14.6px;font-weight:bold;color:#fff;text-shadow:0 0 2px rgba(0,0,0,.75),0 1px 2px rgba(0,0,0,.6)">Ma</div>
<svg class="ico" style="left:1272px;top:348.700px;border-radius:8px 0 0 8px" width="28" height="149.100" viewBox="1272 348.700 28 149.100">
<rect x="1270" y="345" width="32" height="156" fill="#c6c4bc"/>
<g filter="url(#b2)">
<path d="M1270 376q12 4 15 24q2 20-6 32l-9 4z" fill="#2a2c2c"/>
<path d="M1272 418q8 2 10 10l-6 10l-6-2z" fill="#3d6f9a"/>
<path d="M1270 448q10 2 14 10q-2 14-14 18z" fill="#b99a80"/>
<path d="M1270 476q14-4 32 2v22h-32z" fill="#c5c8c6"/>
</g></svg>
<div class="t" style="left:1290px;top:465.64px;font-size:14.6px;font-weight:bold;color:#fff;text-shadow:0 0 2px rgba(0,0,0,.75),0 1px 2px rgba(0,0,0,.6)">Na</div>
<div class="abs tile" style="left:1272px;top:510.400px;width:60px;height:148.500px"></div>
<div class="abs tile" style="left:1156.200px;top:671.400px;width:180px;height:149.300px"></div>
<svg class="ico" style="left:1233.500px;top:713.300px" width="66.500" height="65.400" viewBox="1233.500 713.300 66.500 65.400">
<circle cx="1266.200" cy="746" r="32.700" fill="#fff"/>
<text x="1266.200" y="735" font-family="Liberation Sans,sans-serif" font-size="4.300" fill="#666" text-anchor="middle" textLength="39" lengthAdjust="spacingAndGlyphs">SECRETARIA DE</text>
<text x="1266.200" y="741.400" font-family="Liberation Sans,sans-serif" font-size="4.500" font-weight="bold" fill="#222" text-anchor="middle" textLength="41" lengthAdjust="spacingAndGlyphs">SAÚDE PÚBLICA</text>
<path d="M1236.200 750.500l8 7.500h-8zM1250 747.500h11v9.500z" fill="#e3262e"/>
<path d="M1236.200 758.500l8.500 2.500h-8.500z" fill="#e3262e" opacity=".9"/>
<path d="M1249 750.200l1.300 3.300h3.500l-2.800 2.100l1 3.400l-3-2l-3 2l1-3.400l-2.800-2.100h3.500z" fill="#1f6fc5"/>
<text x="1264.800" y="749.300" font-family="Liberation Sans,sans-serif" font-size="3.400" font-weight="bold" fill="#1f5fb0" textLength="30" lengthAdjust="spacingAndGlyphs">GOVERNO DO</text>
<text x="1264.300" y="760.800" font-family="Liberation Sans,sans-serif" font-size="13.500" font-weight="bold" fill="#1763bd" textLength="31.500" lengthAdjust="spacingAndGlyphs">PARÁ</text>
</svg>
<div class="t" style="left:1169.8px;top:787.60px;font-size:15px;font-weight:bold;color:#fff">Você</div>
</div>
<div id="controls">
<div class="abs" style="left:515.3px;top:841.7px;width:42.6px;height:42.600px;border-radius:21.300px;background:#ea4335"></div>
<div class="abs" style="left:570.4px;top:841.7px;width:42.6px;height:42.600px;border-radius:21.300px;background:#3c4043"></div>
<div class="abs" style="left:625.9px;top:841.7px;width:42.6px;height:42.600px;border-radius:21.300px;background:#3c4043"></div>
<div class="abs" style="left:681.0px;top:841.7px;width:42.6px;height:42.600px;border-radius:21.300px;background:#3c4043"></div>
<div class="abs" style="left:736.0px;top:841.7px;width:59px;height:42.600px;border-radius:21.300px;background:#ea4335"></div>
<svg class="ico" style="left:524.6px;top:852px" width="24" height="24" viewBox="0 0 24 24"><path d="M19 11h-1.700c0 .740-.160 1.430-.430 2.050l1.230 1.230c.560-.980.900-2.090.900-3.280zm-4.020.170c0-.060.020-.110.020-.170V5c0-1.660-1.340-3-3-3S9 3.340 9 5v.180l5.980 5.990zM4.270 3L3 4.270l6.010 6.010V11c0 1.660 1.330 3 2.990 3 .220 0 .440-.030.650-.080l1.660 1.660c-.710.330-1.500.520-2.310.520-2.760 0-5.300-2.100-5.300-5.100H5c0 3.410 2.720 6.230 6 6.720V21h2v-3.280c.910-.130 1.770-.450 2.540-.900L19.730 21 21 19.730 4.270 3z" fill="#fff"/></svg>
<svg class="ico" style="left:579.7px;top:852px" width="24" height="24" viewBox="0 0 24 24"><path d="M15 8v8H5V8h10m1-2H4c-.550 0-1 .450-1 1v10c0 .550.450 1 1 1h12c.550 0 1-.450 1-1v-3.500l4 4v-11l-4 4V7c0-.550-.450-1-1-1z" fill="#fff"/></svg>
<svg class="ico" style="left:634.7px;top:853.5px" width="25" height="20" viewBox="0 0 25 20"><rect x="1" y="1" width="23" height="18" fill="none" stroke="#fff" stroke-width="2"/><path d="M12.500 15v-8M8.500 10l4-4.500l4 4.500z" fill="#fff" stroke="#fff" stroke-width="1.500"/></svg>
<div class="abs" style="left:700.1999999999999px;top:854.9px;width:4.200px;height:4.200px;border-radius:50%;background:#fff"></div>
<div class="abs" style="left:700.1999999999999px;top:861.1999999999999px;width:4.200px;height:4.200px;border-radius:50%;background:#fff"></div>
<svg class="ico" style="left:752.5px;top:850px" width="26" height="26" viewBox="0 0 24 24"><path d="M12 9c-1.600 0-3.150.250-4.600.720v3.100c0 .390-.230.740-.560.900-.980.490-1.870 1.120-2.660 1.850-.180.180-.430.280-.700.280-.280 0-.530-.110-.710-.290L.290 13.080c-.180-.170-.290-.420-.290-.700 0-.280.110-.530.290-.710C3.340 8.780 7.460 7 12 7s8.660 1.780 11.710 4.670c.180.180.290.430.290.710 0 .280-.110.530-.290.710l-2.480 2.480c-.180.180-.430.290-.710.290-.270 0-.520-.110-.700-.280-.790-.740-1.690-1.360-2.670-1.850-.330-.160-.560-.500-.560-.900v-3.100C15.150 9.250 13.600 9 12 9z" fill="#fff"/></svg>
<div class="abs" style="left:1297.500px;top:857px;width:12px;height:16px;border-radius:50%;background:#fff"></div>
</div>
</body>
</html>
